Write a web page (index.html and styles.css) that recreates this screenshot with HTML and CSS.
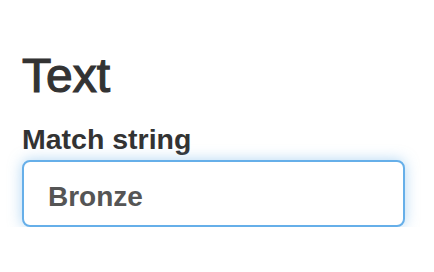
FILE: index.html
```html
<!DOCTYPE html>
<html lang="en">
<head>
<meta charset="UTF-8">
<meta name="viewport" content="width=device-width, initial-scale=1.0">
<title>Text filter</title>
<link rel="stylesheet" href="styles.css">
</head>
<body>

<div class="container">
  <h3 class="title">Text</h3>
  <div class="form-group">
    <label class="label" for="matchString">Match string</label>
    <input type="text" id="matchString" class="input" value="Bronze">
  </div>
</div>

</body>
</html>
```

FILE: styles.css
```css
/* General Styles */
body {
  font-family: "Liberation Sans", Arial, sans-serif;
  margin: 0;
  padding: 0;
  background-color: #fff;
  color: #333;
}

.container {
  padding: 50px 29px 0 22px;
}

.title {
  font-size: 48px;
  font-weight: 400;
  line-height: 1.1;
  margin: 0 0 20px 0;
  -webkit-text-stroke: 1.2px #333;
}

.form-group {
  display: flex;
  flex-direction: column;
}

.label {
  font-size: 28.5px;
  font-weight: bold;
  margin-bottom: 4px;
}

.input {
  box-sizing: border-box;
  height: 67px;
  padding: 16px 24px 8px 24px;
  font-family: inherit;
  font-size: 28px;
  font-weight: bold;
  color: #555;
  background-color: #fff;
  border: 2px solid #66afe9;
  border-radius: 8px;
  box-shadow: 0 0 14px rgba(102, 175, 233, 0.5);
  outline: none;
}
```
